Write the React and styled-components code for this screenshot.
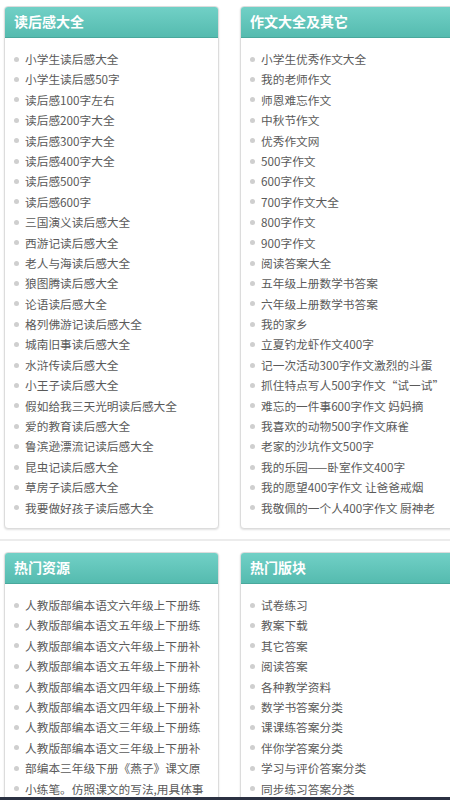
import React from "react";
import styled, { createGlobalStyle } from "styled-components";

const Global = createGlobalStyle`
  html, body { margin: 0; padding: 0; background: #fff; overflow: hidden; }
  body { font-family: "Noto Sans CJK SC", "Noto Sans", sans-serif; width: 450px; }
`;

const Page = styled.div`
  width: 450px;
  height: 800px;
  overflow: hidden;
`;

const Section = styled.div`
  display: grid;
  grid-template-columns: 215px 215px;
  column-gap: 21px;
  padding: ${(p) => (p.$first ? "6px 0 0 4px" : "11px 0 0 4px")};
  margin-top: ${(p) => (p.$first ? "0" : "10px")};
  border-top: ${(p) => (p.$first ? "none" : "2px solid #ececec")};
  width: 480px;
`;

const Card = styled.div`
  border: 1px solid #dcdcdc;
  border-radius: 4px;
  box-shadow: 0 1px 2px rgba(0, 0, 0, 0.12);
  overflow: hidden;
  background: #fff;
  align-self: start;
`;

const Header = styled.div`
  height: 31px;
  line-height: 30px;
  padding-left: 10px;
  color: #fff;
  font-weight: bold;
  font-size: 14px;
  background: linear-gradient(to bottom, #72d1c7, #55bbaf);
  border-bottom: 1px solid #49a89c;
  margin: -1px -1px 0 -1px;
  border-radius: 4px 4px 0 0;
`;

const List = styled.ul`
  list-style: none;
  margin: 0;
  padding: 11px 0 10px 0;
`;

const Item = styled.li`
  height: 20.4px;
  line-height: 20.4px;
  font-size: 11.7px;
  color: #5a5a5a;
  white-space: nowrap;
  overflow: hidden;
  display: flex;
  align-items: center;
  padding-left: 9px;
`;

const Dot = styled.span`
  flex: none;
  width: 5px;
  height: 5px;
  border-radius: 50%;
  background: #cfcfcf;
  margin-right: 6px;
`;

const BottomBar = styled.div`
  position: fixed;
  left: 0;
  right: 0;
  bottom: 0;
  height: 3px;
  background: #2b3142;
`;

const Box = ({ title, items }) => (
  <Card>
    <Header>{title}</Header>
    <List>
      {items.map((t, i) => (
        <Item key={i}>
          <Dot />
          {t}
        </Item>
      ))}
    </List>
  </Card>
);

const a = [
  "小学生读后感大全",
  "小学生读后感50字",
  "读后感100字左右",
  "读后感200字大全",
  "读后感300字大全",
  "读后感400字大全",
  "读后感500字",
  "读后感600字",
  "三国演义读后感大全",
  "西游记读后感大全",
  "老人与海读后感大全",
  "狼图腾读后感大全",
  "论语读后感大全",
  "格列佛游记读后感大全",
  "城南旧事读后感大全",
  "水浒传读后感大全",
  "小王子读后感大全",
  "假如给我三天光明读后感大全",
  "爱的教育读后感大全",
  "鲁滨逊漂流记读后感大全",
  "昆虫记读后感大全",
  "草房子读后感大全",
  "我要做好孩子读后感大全",
];

const b = [
  "小学生优秀作文大全",
  "我的老师作文",
  "师恩难忘作文",
  "中秋节作文",
  "优秀作文网",
  "500字作文",
  "600字作文",
  "700字作文大全",
  "800字作文",
  "900字作文",
  "阅读答案大全",
  "五年级上册数学书答案",
  "六年级上册数学书答案",
  "我的家乡",
  "立夏钓龙虾作文400字",
  "记一次活动300字作文激烈的斗蛋",
  "抓住特点写人500字作文“试一试”",
  "难忘的一件事600字作文 妈妈摘",
  "我喜欢的动物500字作文麻雀",
  "老家的沙坑作文500字",
  "我的乐园——卧室作文400字",
  "我的愿望400字作文 让爸爸戒烟",
  "我敬佩的一个人400字作文 厨神老",
];

const c = [
  "人教版部编本语文六年级上下册练",
  "人教版部编本语文五年级上下册练",
  "人教版部编本语文六年级上下册补",
  "人教版部编本语文五年级上下册补",
  "人教版部编本语文四年级上下册练",
  "人教版部编本语文四年级上下册补",
  "人教版部编本语文三年级上下册练",
  "人教版部编本语文三年级上下册补",
  "部编本三年级下册《燕子》课文原",
  "小练笔。仿照课文的写法,用具体事",
];

const d = [
  "试卷练习",
  "教案下载",
  "其它答案",
  "阅读答案",
  "各种教学资料",
  "数学书答案分类",
  "课课练答案分类",
  "伴你学答案分类",
  "学习与评价答案分类",
  "同步练习答案分类",
];

export default function App() {
  return (
    <Page>
      <Global />
      <Section $first>
        <Box title="读后感大全" items={a} />
        <Box title="作文大全及其它" items={b} />
      </Section>
      <Section>
        <Box title="热门资源" items={c} />
        <Box title="热门版块" items={d} />
      </Section>
      <BottomBar />
    </Page>
  );
}
